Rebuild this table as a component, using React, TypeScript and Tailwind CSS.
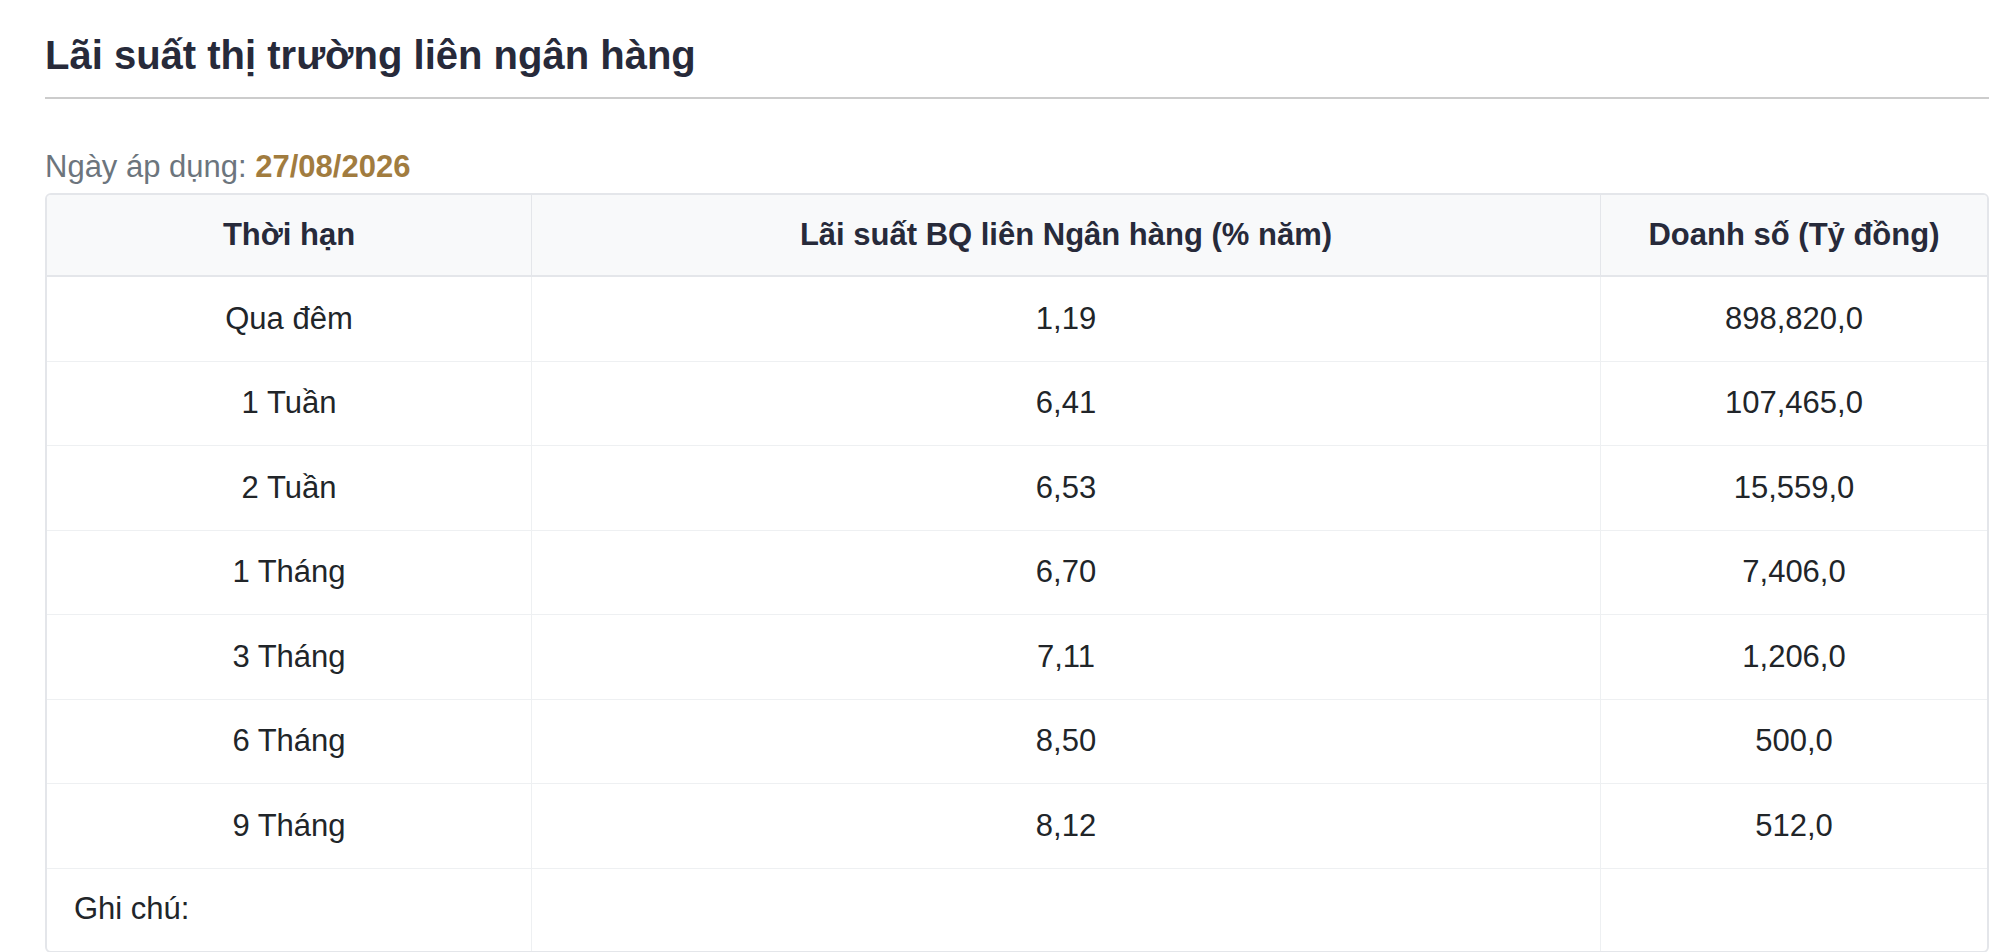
const rows = [
  { term: 'Qua đêm', rate: '1,19', volume: '898,820,0' },
  { term: '1 Tuần', rate: '6,41', volume: '107,465,0' },
  { term: '2 Tuần', rate: '6,53', volume: '15,559,0' },
  { term: '1 Tháng', rate: '6,70', volume: '7,406,0' },
  { term: '3 Tháng', rate: '7,11', volume: '1,206,0' },
  { term: '6 Tháng', rate: '8,50', volume: '500,0' },
  { term: '9 Tháng', rate: '8,12', volume: '512,0' },
];

const gridCols = 'grid grid-cols-[485px_1069px_1fr]';

export default function App() {
  return (
    <div className="min-h-[952px] bg-white font-['Liberation_Sans',Arial,sans-serif] text-[#212529]">
      <div className="ml-[45px] w-[1944px] pt-[31px]">
        <h1 className="border-b-2 border-[#cccccc] pb-[18px] text-[40px] font-bold leading-[48px] text-[#272a3a]">
          Lãi suất thị trường liên ngân hàng
        </h1>

        <p className="mt-[50px] mb-[8px] text-[31px] leading-[36px] text-[#6c757d]">
          Ngày áp dụng: <span className="font-bold text-[#a17c3f]">27/08/2026</span>
        </p>

        <div className="overflow-hidden rounded-[6px] border-2 border-[#e4e6ea]">
          <div className={`${gridCols} h-[82px] border-b-2 border-[#e4e6ea] bg-[#f8f9fa] text-[31px] font-bold text-[#272a3a]`}>
            <div className="flex items-center justify-center border-r border-[#e4e6ea]">Thời hạn</div>
            <div className="flex items-center justify-center border-r border-[#e4e6ea]">Lãi suất BQ liên Ngân hàng (% năm)</div>
            <div className="flex items-center justify-center">Doanh số (Tỷ đồng)</div>
          </div>

          {rows.map((row) => (
            <div key={row.term} className={`${gridCols} h-[84.5px] border-b border-[#eef0f2] text-[31px]`}>
              <div className="flex items-center justify-center border-r border-[#eef0f2]">{row.term}</div>
              <div className="flex items-center justify-center border-r border-[#eef0f2]">{row.rate}</div>
              <div className="flex items-center justify-center">{row.volume}</div>
            </div>
          ))}

          <div className={`${gridCols} h-[82px] text-[31px]`}>
            <div className="flex items-center border-r border-[#eef0f2] pl-[27px]">Ghi chú:</div>
            <div className="border-r border-[#eef0f2]" />
            <div />
          </div>
        </div>
      </div>
    </div>
  );
}
